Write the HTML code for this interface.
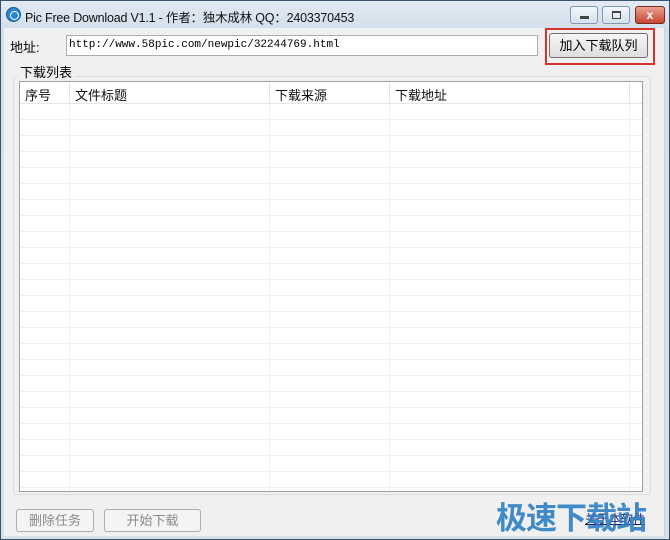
<!DOCTYPE html>
<html><head><meta charset="utf-8"><style>
*{margin:0;padding:0;box-sizing:border-box}
body{width:670px;height:540px;overflow:hidden;background:#dbe5ef;font-family:"Liberation Sans","Noto Sans CJK SC",sans-serif;font-size:12px;position:relative}
.win{position:absolute;left:0;top:0;width:670px;height:540px;border:1px solid #3a526b;background:linear-gradient(#e2eaf3,#d3dfeb 28px,#d6e1ec);}
.title{position:absolute;left:24px;top:6px;font-size:12.5px;color:#111;letter-spacing:-0.2px}
.ico{position:absolute;left:5px;top:6px;width:15px;height:15px;border-radius:50%;background:#2a86d0;border:1px solid #155a95}
.ico:after{content:"";position:absolute;left:3px;top:3px;width:7px;height:7px;border-radius:50%;border:1.5px solid #fff}
.cb{position:absolute;top:5px;height:18px;border:1px solid #8199b3;border-radius:3px;background:linear-gradient(#f3f7fb,#d6e1ec)}
.client{position:absolute;left:4px;top:28px;width:661px;height:508px;background:#f0f0f0;border-right:1px solid #c9d3dc}
.abs{position:absolute}
.list{position:absolute;left:19px;top:81px;width:624px;height:411px;background:#fff;border:1px solid #a0a0a0;overflow:hidden}
.hd{position:absolute;left:0;top:0;width:100%;height:22px;border-bottom:1px solid #e5e5e5;background:#fff}
.hd span{position:absolute;top:3px;font-size:13px;color:#111}
.vl{position:absolute;top:0;width:1px;height:100%;background:#eeeeee}
.btn{position:absolute;border:1px solid #adadad;border-radius:3px;background:linear-gradient(#f6f6f6,#dedede);text-align:center;font-size:13px}
</style></head><body>
<div class="win">
<div class="ico"></div>
<div class="title">Pic Free Download V1.1 - 作者：独木成林 QQ：2403370453</div>
<div class="cb" style="left:569px;width:28px"><div class="abs" style="left:9px;top:9px;width:9px;height:3px;background:#444"></div></div>
<div class="cb" style="left:601px;width:28px"><div class="abs" style="left:9px;top:4px;width:9px;height:8px;border:1px solid #444;border-top-width:2px"></div></div>
<div class="cb" style="left:634px;width:30px;background:linear-gradient(#e8a392,#c7452f);border-color:#7a2a1f;color:#fff;text-align:center;font-weight:bold;font-size:12px;line-height:16px">x</div>
</div>
<div class="client"></div>
<div class="abs" style="left:10px;top:37px;font-size:13px">地址:</div>
<div class="abs" style="left:66px;top:35px;width:472px;height:21px;background:#fff;border:1px solid #abadb3;font-family:'Liberation Mono',monospace;font-size:11px;padding:3px 0 0 2px">http://www.58pic.com/newpic/32244769.html</div>
<div class="abs" style="left:545px;top:28px;width:110px;height:37px;border:2px solid #d9312c"></div>
<div class="btn" style="left:549px;top:33px;width:99px;height:25px;line-height:23px;border-color:#707070">加入下载队列</div>
<div class="abs" style="left:13px;top:76px;width:638px;height:419px;border:1px solid #d5dfe5;border-radius:3px"></div>
<div class="abs" style="left:18px;top:62px;font-size:13px;background:#f0f0f0;padding:0 2px">下载列表</div>
<div class="list">
<div style="position:absolute;left:0;top:22px;width:100%;height:400px;background:repeating-linear-gradient(#fff 0,#fff 15px,#efefef 15px,#efefef 16px)"></div>
<div class="vl" style="left:49px"></div><div class="vl" style="left:249px"></div><div class="vl" style="left:369px"></div><div class="vl" style="left:609px"></div>
<div class="hd"><span style="left:5px">序号</span><span style="left:55px">文件标题</span><span style="left:255px">下载来源</span><span style="left:375px">下载地址</span>
<div class="vl" style="left:49px;background:#e5e5e5"></div><div class="vl" style="left:249px;background:#e5e5e5"></div><div class="vl" style="left:369px;background:#e5e5e5"></div><div class="vl" style="left:609px;background:#e5e5e5"></div></div>
</div>
<div class="btn" style="left:16px;top:509px;width:78px;height:23px;line-height:21px;color:#8a8a8a;background:#f4f4f4">删除任务</div>
<div class="btn" style="left:104px;top:509px;width:97px;height:23px;line-height:21px;color:#8a8a8a;background:#f4f4f4">开始下载</div>
<div class="abs" style="left:585px;top:510px;font-size:12px;color:#1a1a6a;text-decoration:underline">关于本软件</div>
<div class="abs" style="left:496px;top:493px;font-size:31px;font-weight:bold;color:#2f7fc4;opacity:.9;letter-spacing:-1px">极速下载站</div>
</body></html>
